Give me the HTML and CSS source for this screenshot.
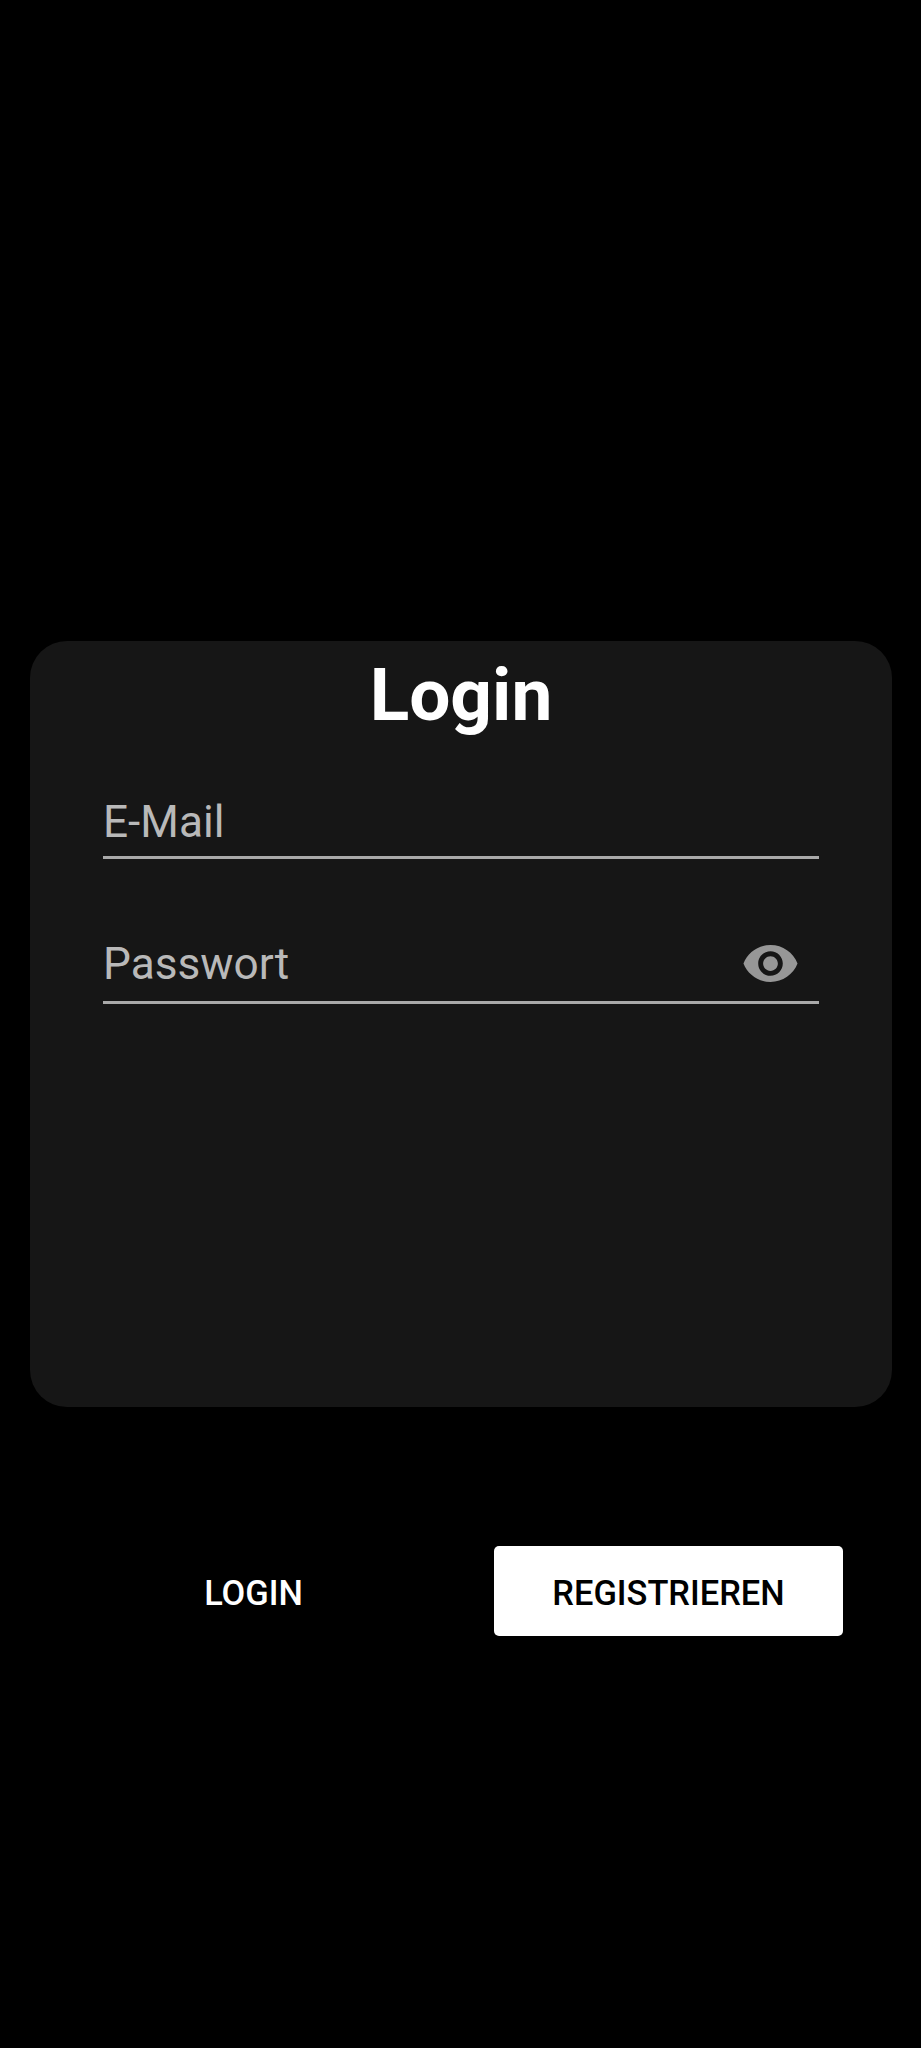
FILE: index.html
```html
<!DOCTYPE html>
<html lang="de">
<head>
<meta charset="utf-8">
<title>Login</title>
<link rel="stylesheet" href="styles.css">
</head>
<body>
<main class="screen">
  <section class="card">
    <h1 class="title">Login</h1>
    <div class="field email"><span class="label">E-Mail</span></div>
    <div class="field password">
      <span class="label">Passwort</span>
      <svg class="eye" viewBox="0 0 24 24"><path d="M12 4.5C7 4.5 2.73 7.61 1 12c1.730 4.390 6 7.500 11 7.500s9.270-3.110 11-7.500c-1.730-4.390-6-7.500-11-7.500zM12 17c-2.760 0-5-2.240-5-5s2.240-5 5-5 5 2.240 5 5-2.240 5-5 5zm0-8c-1.660 0-3 1.340-3 3s1.340 3 3 3 3-1.340 3-3-1.340-3-3-3z"/></svg>
    </div>
  </section>
  <div class="actions">
    <button class="btn ghost"><span>LOGIN</span></button>
    <button class="btn solid"><span>REGISTRIEREN</span></button>
  </div>
</main>
</body>
</html>
```
FILE: styles.css
```css
* { box-sizing: border-box; }
body { margin: 0; background: #000; font-family: Roboto, sans-serif; }
.screen { height: 2048px; padding: 641px 29px 0 30px; overflow: hidden; }
.card { height: 766px; border-radius: 37px; background: #161616; padding: 11px 73px 0; }
.title { margin: 0; color: #fff; font-size: 73px; line-height: 86px; font-weight: 700; text-align: center; }
.field { display: flex; align-items: center; justify-content: space-between; border-bottom: 3px solid #a9a9a9; }
.label { color: #b9b9b9; font-size: 44.2px; line-height: 52px; }
.email { height: 75px; margin-top: 46px; padding-top: 4px; }
.password { height: 80px; margin-top: 65px; padding: 2px 19px 0 0; }
.eye { width: 59px; height: 59px; fill: #979797; }
.actions { display: flex; justify-content: space-between; margin-top: 139px; padding: 0 49px; }
.btn { width: 349px; height: 90px; border: 0; border-radius: 5px; padding: 3px 0 0; font: 500 34.4px/40px Roboto, sans-serif; }
.ghost { background: transparent; color: #fff; }
.solid { background: #fff; color: #000; }
```
